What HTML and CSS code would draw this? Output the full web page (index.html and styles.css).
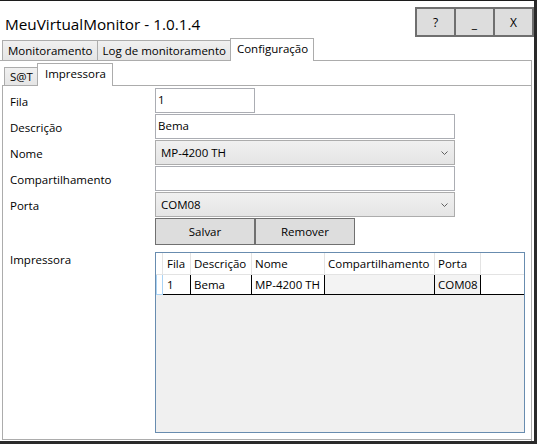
FILE: index.html
```html
<!DOCTYPE html>
<html lang="pt">
<head>
<meta charset="utf-8">
<title>MeuVirtualMonitor</title>
<link rel="stylesheet" href="styles.css">
</head>
<body>
<div class="window">
  <div class="titlebar">
    <div class="title">MeuVirtualMonitor - 1.0.1.4</div>
    <div class="caption-buttons">
      <div class="cbtn">?</div>
      <div class="cbtn cbtn-min">_</div>
      <div class="cbtn">X</div>
    </div>
  </div>
  <div class="tabs main-tabs">
    <div class="tab">Monitoramento</div>
    <div class="tab">Log de monitoramento</div>
    <div class="tab active">Configuração</div>
  </div>
  <div class="main-panel">
    <div class="tabs sub-tabs">
      <div class="tab">S@T</div>
      <div class="tab active">Impressora</div>
    </div>
    <div class="inner-panel">
      <div class="form">
        <div class="label">Fila</div>
        <div class="field"><div class="textbox short">1</div></div>
        <div class="label">Descrição</div>
        <div class="field"><div class="textbox">Bema</div></div>
        <div class="label">Nome</div>
        <div class="field"><div class="combo"><span>MP-4200 TH</span><svg class="chev" width="7" height="4" viewBox="0 0 7 4"><polyline points="0.5,0.5 3.5,3.5 6.5,0.5" fill="none" stroke="#5f5f5f" stroke-width="1"/></svg></div></div>
        <div class="label">Compartilhamento</div>
        <div class="field"><div class="textbox"></div></div>
        <div class="label">Porta</div>
        <div class="field"><div class="combo"><span>COM08</span><svg class="chev" width="7" height="4" viewBox="0 0 7 4"><polyline points="0.5,0.5 3.5,3.5 6.5,0.5" fill="none" stroke="#5f5f5f" stroke-width="1"/></svg></div></div>
        <div class="label"></div>
        <div class="field buttons"><div class="btn">Salvar</div><div class="btn">Remover</div></div>
        <div class="label grid-label">Impressora</div>
        <div class="field grid-field">
          <div class="datagrid">
            <div class="grow ghead">
              <div class="c rh"></div>
              <div class="c c1">Fila</div>
              <div class="c c2">Descrição</div>
              <div class="c c3">Nome</div>
              <div class="c c4">Compartilhamento</div>
              <div class="c c5">Porta</div>
              <div class="c fill"></div>
            </div>
            <div class="grow gdata">
              <div class="c rh"></div>
              <div class="c c1">1</div>
              <div class="c c2">Bema</div>
              <div class="c c3">MP-4200 TH</div>
              <div class="c c4"></div>
              <div class="c c5">COM08</div>
              <div class="c fill"></div>
            </div>
          </div>
        </div>
      </div>
    </div>
  </div>
</div>
</body>
</html>
```

FILE: styles.css
```css
* { box-sizing: border-box; }
html, body { margin: 0; padding: 0; background: #ffffff; }
body {
  width: 537px;
  height: 444px;
  overflow: hidden;
  font-family: "Open Sans", "Noto Sans", "DejaVu Sans", sans-serif;
  font-size: 11.5px;
  color: #000;
}
.window {
  width: 537px;
  height: 444px;
  border-top: 1px solid #1c1c1c;
  border-right: 3px solid #2a2a2a;
  border-bottom: 3px solid #2a2a2a;
  display: flex;
  flex-direction: column;
  background: #fff;
}
.titlebar {
  height: 37px;
  display: flex;
  justify-content: space-between;
  align-items: flex-start;
  flex: none;
}
.title {
  font-size: 15.3px;
  line-height: 20px;
  padding: 13px 0 0 5px;
}
.caption-buttons {
  display: flex;
  margin-top: 6px;
  margin-right: 0;
}
.cbtn {
  width: 41px;
  height: 30px;
  border: 2px solid #6f6f6f;
  background: #dddddd;
  margin-left: -2px;
  display: flex;
  align-items: center;
  justify-content: center;
  font-size: 12px;
  color: #000;
}
.cbtn-min { align-items: flex-end; padding-bottom: 3px; }

.tabs {
  display: flex;
  align-items: flex-end;
  flex: none;
  position: relative;
  z-index: 1;
}
.tab {
  border: 1px solid #acacac;
  border-bottom: none;
  background: linear-gradient(#f0f0f0, #e5e5e5);
  margin-left: -1px;
  white-space: nowrap;
  display: flex;
  align-items: center;
}
.tab.active { background: #ffffff; }

.main-tabs { height: 22px; padding-left: 3px; }
.main-tabs .tab { height: 20px; padding: 0 5px 1px 5px; }
.main-tabs .tab:first-child { padding: 0 4px 1px 5px; }
.main-tabs .tab:nth-child(2) { padding: 0 4px 1px 5px; }
.main-tabs .tab.active { height: 23px; margin-bottom: -1px; padding: 0 5px 3px 6px; }

.main-panel {
  flex: 1;
  border-top: 1px solid #acacac;
  border-right: 1px solid #acacac;
  width: 532px;
  display: flex;
  flex-direction: column;
  padding-bottom: 1px;
}
.sub-tabs { height: 24px; padding-left: 5px; }
.sub-tabs .tab { height: 18px; padding: 0 4px 1px 5px; }
.sub-tabs .tab.active { height: 23px; margin-bottom: -1px; padding: 0 6px 3px 7px; }

.inner-panel {
  flex: 1;
  margin-left: 2px;
  border: 1px solid #acacac;
  border-right: none;
  padding: 2px 6px 6px 7px;
  display: flex;
}
.form {
  flex: 1;
  display: grid;
  grid-template-columns: 145px 1fr;
  grid-template-rows: repeat(5, 25px) 27px 1fr;
  row-gap: 1px;
}
.label {
  display: flex;
  align-items: center;
  padding-top: 2px;
  white-space: nowrap;
}
.field { display: flex; }
.textbox {
  width: 300px;
  height: 25px;
  border: 1px solid #abadb3;
  background: #fff;
  padding: 3px 2px 0 2px;
  line-height: 15px;
}
.textbox.short { width: 100px; }
.combo {
  width: 300px;
  height: 25px;
  border: 1px solid #acacac;
  background: linear-gradient(#f0f0f0, #e5e5e5);
  display: flex;
  align-items: center;
  justify-content: space-between;
  padding: 0 6px 0 5px;
}
.chev { display: block; margin-top: 1px; }
.buttons { gap: 0; }
.btn {
  width: 100px;
  height: 27px;
  border: 1px solid #707070;
  background: #dddddd;
  display: flex;
  align-items: center;
  justify-content: center;
}
.grid-label { align-self: start; margin-top: 5px; height: 16px; padding-top: 0; }
.grid-field { margin-top: 6px; }
.datagrid {
  flex: 1;
  border: 1px solid #688caf;
  background: #f0f0f0;
  display: flex;
  flex-direction: column;
}
.grow { display: flex; }
.c {
  white-space: nowrap;
  overflow: hidden;
  padding: 0 3px;
  display: flex;
  align-items: center;
}
.rh { width: 7px; padding: 0; }
.c1 { width: 28px; padding-left: 4px; }
.c2 { width: 61px; }
.c3 { width: 73px; }
.c4 { width: 110px; }
.c5 { width: 46px; }
.fill { flex: 1; }

.ghead { height: 22px; background: #ffffff; border-bottom: 1px solid #e3e3e3; }
.ghead .c { border-right: 1px solid #e3e3e3; }
.ghead .fill { border-right: none; }

.gdata { height: 20px; }
.gdata .c { background: #ffffff; border-bottom: 1px solid #000; border-right: 1px solid #000; }
.gdata .c4, .gdata .c5 { background: #f3f3f3; }
.gdata .rh { border: 1px solid #a9d3f5; border-top: none; background: #fff; }
.gdata .fill { border-right: none; }
```
